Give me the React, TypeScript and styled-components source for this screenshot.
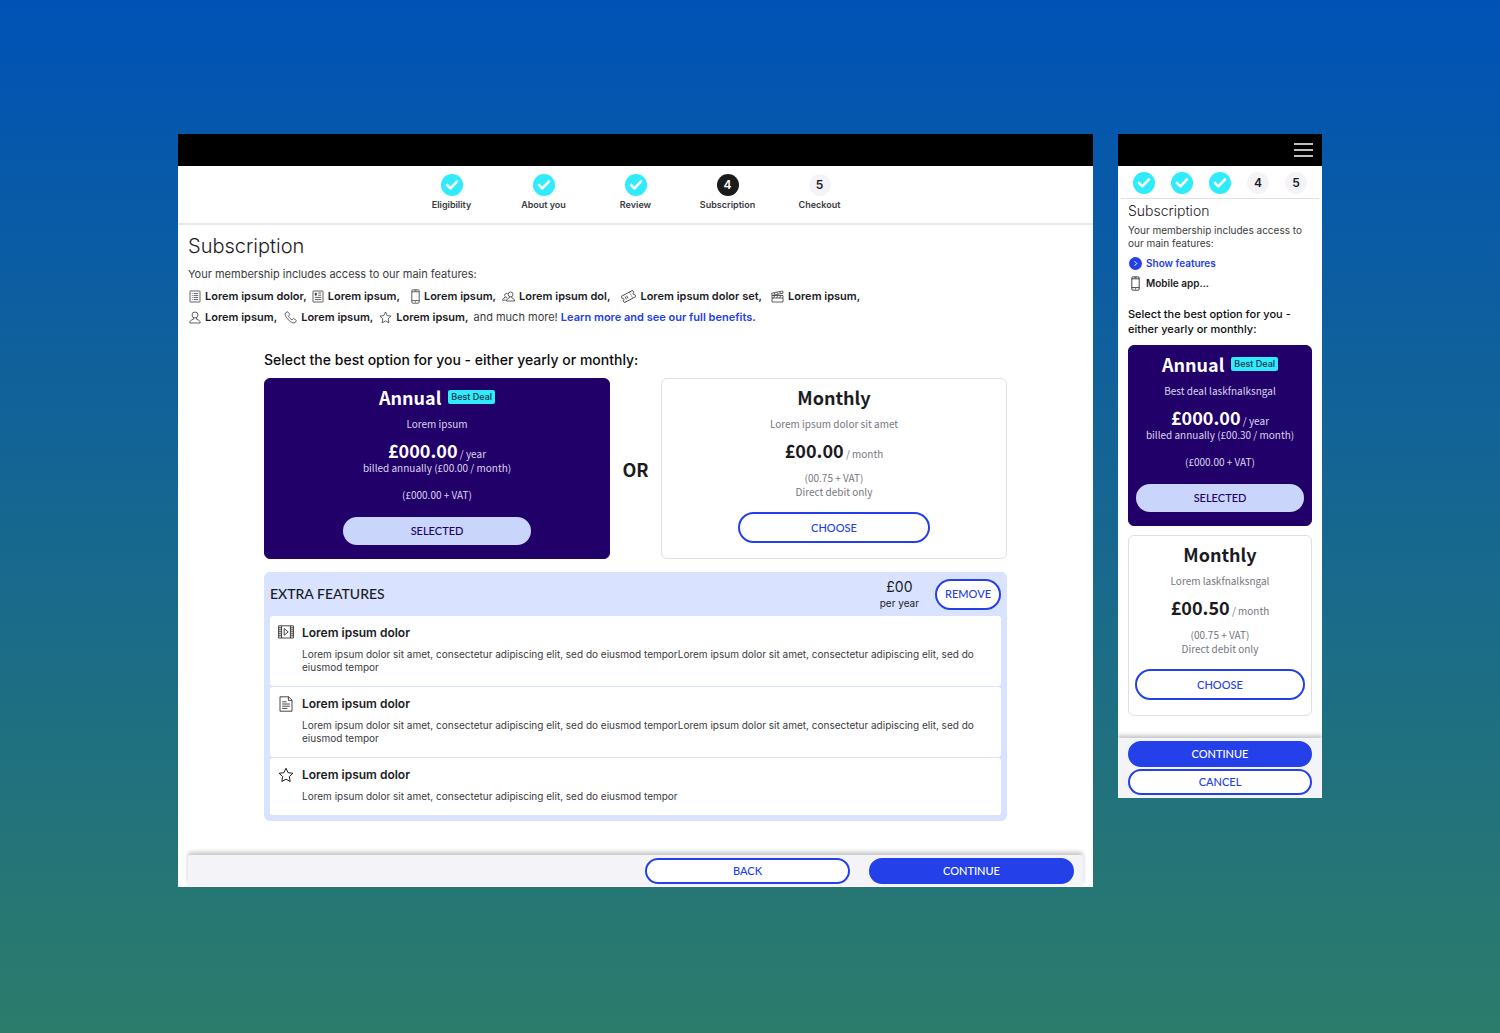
import React from "react";
import styled, { createGlobalStyle, css } from "styled-components";

const sans = `Inter, "Open Sans", sans-serif`;
const plan = `"Noto Sans CJK JP", "Noto Sans", sans-serif`;
const caps = `Lato, "Open Sans", sans-serif`;

const color = {
  ink: "#1b1b1f",
  text: "#3a3a3e",
  muted: "#76767e",
  blue: "#2440e8",
  cyan: "#2febfb",
  navy: "#22006a",
  pale: "#c9d5fa",
  panel: "#d9e2fe",
  mist: "#f4f3f8",
  line: "#e0e0e2",
};

const Global = createGlobalStyle`
  *, *::before, *::after { box-sizing: border-box; }
  body { margin: 0; font-family: ${sans}; color: ${color.ink}; }
  h1, h2, h3, p, ol, ul { margin: 0; padding: 0; font-weight: 400; }
  ol, ul { list-style: none; }
  svg { display: block; flex: none; }
`;

const Page = styled.main`
  min-height: 100vh;
  padding: 134px 178px;
  display: grid;
  grid-template-columns: minmax(0, 1fr) 204px;
  gap: 25px;
  align-items: start;
  background: linear-gradient(#0052b6, #2c7c6b);
`;

const Screen = styled.section`
  background: #fff;
  overflow: hidden;
`;

const TopBar = styled.header`
  height: 32px;
  padding: 0 9px;
  display: flex;
  align-items: center;
  justify-content: flex-end;
  background: #000;
`;

const MenuButton = styled.button`
  width: 19px;
  height: 14px;
  padding: 0;
  border: 0;
  background: none;
  color: #fff;
`;

const Steps = styled.ol<{ $compact?: boolean }>`
  display: flex;
  justify-content: center;
  ${(p) =>
    p.$compact
      ? css`
          margin: 0 3px;
          padding: 6px 0 4px;
          gap: 16px;
          border-bottom: 1px solid ${color.line};
        `
      : css`
          padding: 8px 0 12px;
          border-bottom: 2px solid #e9e9eb;
        `}
`;

const Step = styled.li<{ $compact?: boolean }>`
  width: ${(p) => (p.$compact ? 22 : 92)}px;
  display: flex;
  flex-direction: column;
  align-items: center;
  gap: 3px;
  font-size: 9px;
  line-height: 12px;
  font-weight: 600;
  color: ${color.text};
`;

const Dot = styled.span<{ $state: "done" | "current" | "next" }>`
  width: 22px;
  height: 22px;
  display: grid;
  place-items: center;
  border-radius: 50%;
  font-size: 12px;
  font-weight: 600;
  background: ${(p) => ({ done: color.cyan, current: "#1b1b1b", next: color.mist })[p.$state]};
  color: ${(p) => (p.$state === "next" ? color.ink : "#fff")};
`;

const Content = styled.div<{ $compact?: boolean }>`
  padding: ${(p) => (p.$compact ? "3px 10px 22px" : "9px 10px 34px")};
`;

const Title = styled.h1<{ $compact?: boolean }>`
  font-size: ${(p) => (p.$compact ? 14 : 20)}px;
  line-height: ${(p) => (p.$compact ? 18 : 24)}px;
  font-weight: 300;
`;

const Intro = styled.p<{ $compact?: boolean }>`
  margin-top: ${(p) => (p.$compact ? 4 : 8)}px;
  font-size: ${(p) => (p.$compact ? 10 : 11)}px;
  line-height: ${(p) => (p.$compact ? 13 : 16)}px;
  color: ${color.text};
`;

const FeatureLine = styled.ul`
  display: flex;
  flex-wrap: wrap;
  column-gap: 1px;
  margin-top: 6px;
  font-size: 11px;
  line-height: 16px;
  & + & {
    margin-top: 5px;
  }
`;

const Feature = styled.li`
  display: flex;
  align-items: center;
  font-weight: 600;
`;

const IconSlot = styled.span<{ $width: number }>`
  width: ${(p) => p.$width}px;
  padding-right: 4px;
  display: flex;
  justify-content: flex-end;
  color: ${color.text};
`;

const More = styled.li`
  padding-left: 4px;
  color: ${color.text};
`;

const TextLink = styled.a`
  color: ${color.blue};
  font-weight: 600;
  text-decoration: none;
`;

const Narrow = styled.div`
  margin: 26px 76px 0;
`;

const Choose = styled.h2<{ $compact?: boolean }>`
  font-weight: 500;
  color: #0c0c0e;
  ${(p) =>
    p.$compact
      ? css`
          margin: 14px 0 8px;
          font-size: 11px;
          line-height: 15px;
        `
      : css`
          margin-bottom: 9px;
          font-size: 14px;
          line-height: 18px;
        `}
`;

const Plans = styled.div<{ $compact?: boolean }>`
  display: grid;
  ${(p) =>
    p.$compact
      ? "row-gap: 9px;"
      : "grid-template-columns: minmax(0, 1fr) 51px minmax(0, 1fr); align-items: stretch;"}
`;

const Or = styled.span`
  align-self: center;
  text-align: center;
  font: 600 18px/24px ${plan};
`;

const Card = styled.article<{ $selected?: boolean }>`
  min-height: 181px;
  padding: 6px 4px 13px;
  display: flex;
  flex-direction: column;
  align-items: center;
  border: 1px solid ${(p) => (p.$selected ? color.navy : color.line)};
  border-radius: 6px;
  background: ${(p) => (p.$selected ? color.navy : "#fff")};
  color: ${(p) => (p.$selected ? "#dcd6ee" : color.muted)};
  font: 400 10px/14px ${plan};
  text-align: center;
`;

const PlanName = styled.h3<{ $selected?: boolean }>`
  display: flex;
  align-items: center;
  gap: 7px;
  font-size: 18px;
  line-height: 24px;
  font-weight: 600;
  color: ${(p) => (p.$selected ? "#fff" : color.ink)};
`;

const Badge = styled.span`
  padding: 0 3px;
  border-radius: 2px;
  background: ${color.cyan};
  color: #10304a;
  font: 500 9px/14px ${sans};
`;

const Tagline = styled.p`
  margin: 8px 0 9px;
`;

const Price = styled.p<{ $selected?: boolean }>`
  font-size: 18px;
  line-height: 21px;
  strong {
    font-weight: 700;
    color: ${(p) => (p.$selected ? "#fff" : color.ink)};
  }
  small {
    font-size: 10px;
    line-height: 10px;
  }
`;

const Notes = styled.div<{ $selected?: boolean }>`
  margin: ${(p) => (p.$selected ? "13px 0 15px" : "10px 0 13px")};
`;

const Pill = styled.button<{ $kind: "solid" | "outline" | "selected"; $width?: string; $height: number }>`
  width: ${(p) => p.$width ?? "auto"};
  height: ${(p) => p.$height}px;
  padding: 0;
  border: 2px solid
    ${(p) => ({ solid: color.blue, outline: color.blue, selected: color.pale })[p.$kind]};
  border-radius: 16px;
  background: ${(p) => ({ solid: color.blue, outline: "#fff", selected: color.pale })[p.$kind]};
  color: ${(p) => ({ solid: "#fff", outline: color.blue, selected: color.navy })[p.$kind]};
  font: 500 11px/14px ${caps};
  cursor: pointer;
`;

const Extras = styled.section`
  margin-top: 13px;
  padding: 0 6px 6px;
  border-radius: 6px;
  background: ${color.panel};
`;

const ExtrasHead = styled.header`
  height: 44px;
  display: flex;
  align-items: center;
  gap: 16px;
`;

const ExtrasTitle = styled.h2`
  flex: 1;
  font: 500 14px/20px ${caps};
`;

const ExtrasPrice = styled.p`
  display: flex;
  flex-direction: column;
  text-align: center;
  font-size: 10px;
  line-height: 14px;
  strong {
    font-size: 14px;
    line-height: 18px;
    font-weight: 400;
  }
`;

const ExtrasList = styled.ul`
  display: grid;
  gap: 1px;
`;

const Extra = styled.li`
  padding: 9px 8px 12px;
  display: grid;
  grid-template-columns: 16px minmax(0, 1fr);
  column-gap: 8px;
  justify-items: center;
  border-radius: 3px;
  background: #fff;
`;

const ExtraBody = styled.div`
  justify-self: stretch;
`;

const ExtraName = styled.h3`
  font-size: 12px;
  line-height: 16px;
  font-weight: 600;
`;

const ExtraText = styled.p`
  margin-top: 7px;
  font-size: 10px;
  line-height: 13px;
  color: ${color.text};
`;

const Footer = styled.footer<{ $compact?: boolean }>`
  display: flex;
  background: ${color.mist};
  box-shadow: 0 -3px 4px rgba(0, 0, 0, 0.22);
  ${(p) =>
    p.$compact
      ? css`
          flex-direction: column;
          gap: 2px;
          padding: 3px 10px;
        `
      : css`
          justify-content: flex-end;
          gap: 19px;
          margin: 0 10px 1px;
          padding: 3px 9px 2px;
          border-radius: 3px 3px 0 0;
        `}
`;

const Shortcuts = styled.div`
  margin-top: 3px;
  font-size: 10px;
  line-height: 20px;
  font-weight: 600;
`;

const Shortcut = styled.div`
  display: flex;
  align-items: center;
  gap: 3px;
  svg {
    width: 15px;
  }
`;

type IconName =
  | "list" | "news" | "phone" | "group" | "ticket" | "clapper"
  | "person" | "call" | "star" | "film" | "doc";

const icons: Record<IconName, { w: number; h: number; art: React.ReactNode }> = {
  list: {
    w: 12, h: 13,
    art: (
      <>
        <rect x="1" y="1" width="10" height="11" rx=".5" />
        <path d="M2.8 3.6h.8M4.6 3.6h4.6M2.8 5.6h.8M4.6 5.6h4.6M2.8 7.6h.8M4.6 7.6h4.6M2.8 9.6h.8M4.6 9.6h4.6" />
      </>
    ),
  },
  news: {
    w: 12, h: 13,
    art: (
      <>
        <rect x="1" y="1" width="10" height="11" rx=".5" />
        <path d="M6.2 3h3M6.2 5.2h3M2.8 7.4h6.4M2.8 9.6h6.4" />
        <path d="M3.2 3.2h1.2v2H3.200z" fill="currentColor" />
      </>
    ),
  },
  phone: {
    w: 9, h: 15,
    art: (
      <>
        <rect x=".8" y=".8" width="7.4" height="13.4" rx="1.2" />
        <path d="M.8 2.8h7.4M.8 11.6h7.4M3.4 1.8h2.2M4 12.9h1" />
      </>
    ),
  },
  group: {
    w: 13, h: 11,
    art: (
      <>
        <circle cx="8.6" cy="3.4" r="2.4" />
        <path d="M7.400 5.800v1.200C5.600 7.600 4.400 8.400 4.400 10h8.200c0-1.600-1-2.400-2.800-3V5.800" />
        <path d="M5.600 2.700a1.900 1.900 0 1 0-1 3.500v.9M2.600 6v1C1.200 7.500.5 8 .5 9.200h3.200" />
      </>
    ),
  },
  ticket: {
    w: 15, h: 13,
    art: (
      <g transform="rotate(-28 7.500 6.500)">
        <path d="M1 3h13v2.300a1.200 1.200 0 0 0 0 2.400V10H1V7.700a1.200 1.200 0 0 0 0-2.400z" />
        <path d="M4.400 5v3M6.200 5v3" />
        <path d="M10.500 3.500v6" strokeDasharray="1.200 1" />
      </g>
    ),
  },
  clapper: {
    w: 13, h: 13,
    art: (
      <>
        <path d="M1 5.500h11V12H1zM1 8h11M1 5.500L.7 3.200 11.700 1l.4 2.200L1 5.500" />
        <path d="M3 2.800l1.400 2M5.800 2.200l1.400 2M8.600 1.700l1.400 2M3.800 5.500L2.600 8M6.800 5.500L5.600 8M9.800 5.500L8.600 8" />
      </>
    ),
  },
  person: {
    w: 12, h: 13,
    art: (
      <>
        <circle cx="6" cy="4" r="3" />
        <path d="M4.600 6.800v1.400C2.200 9 .8 9.600.8 12h10.400c0-2.400-1.400-3-3.800-3.800V6.800" />
      </>
    ),
  },
  call: {
    w: 13, h: 13,
    art: (
      <path d="M3.400.8L1.400 2c-1 1 0 3.900 2.800 6.700s5.700 3.900 6.900 2.900l1.300-1.900c0-.5-2.300-2.100-2.900-2.100-.5 0-.9 1.200-1.500 1.200-.7 0-3.500-2.700-3.500-3.500 0-.6 1.200-1 1.200-1.600C5.700 3.100 4 .8 3.400.8z" />
    ),
  },
  star: {
    w: 13, h: 13,
    art: <path d="M6.500 1l1.700 3.600 3.900.5-2.900 2.700.7 4-3.400-1.900-3.400 1.900.7-4L.9 5.100l3.900-.5z" strokeLinejoin="round" />,
  },
  film: {
    w: 16, h: 14,
    art: (
      <>
        <path d="M.6.800h14.800v12.200H.6zM3.600.8V13M12.400.8V13" />
        <path d="M.6 2.800h3M.6 4.800h3M.6 6.800h3M.6 8.800h3M.6 10.800h3M12.400 2.800h3M12.400 4.800h3M12.400 6.800h3M12.400 8.800h3M12.400 10.800h3" />
        <path d="M6.200 3.600v6.600l4-3.300z" />
      </>
    ),
  },
  doc: {
    w: 14, h: 16,
    art: (
      <>
        <path d="M1 .800h8.600L13 4.200v11H1zM9.400.8v3.600H13" />
        <path d="M3.200 5.800h4.400M3.200 8h7.600M3.200 10.200h7.600M3.200 12.400h5.200" />
      </>
    ),
  },
};

function Icon({ name, scale = 1 }: { name: IconName; scale?: number }) {
  const { w, h, art } = icons[name];
  return (
    <svg
      width={w * scale}
      height={h * scale}
      viewBox={`0 0 ${w} ${h}`}
      fill="none"
      stroke="currentColor"
      strokeWidth=".8"
      aria-hidden="true"
    >
      {art}
    </svg>
  );
}

const Check = () => (
  <svg width="14" height="12" viewBox="0 0 14 12" fill="none" stroke="#fff" strokeWidth="2.600" aria-hidden="true">
    <path d="M2 6l3.400 3.400L12 2.400" strokeLinecap="round" strokeLinejoin="round" />
  </svg>
);

const stepNames = ["Eligibility", "About you", "Review", "Subscription", "Checkout"];

function Progress({ compact }: { compact?: boolean }) {
  return (
    <Steps $compact={compact}>
      {stepNames.map((name, i) => (
        <Step key={name} $compact={compact}>
          <Dot $state={i < 3 ? "done" : i === 3 && !compact ? "current" : "next"}>
            {i < 3 ? <Check /> : i + 1}
          </Dot>
          {!compact && name}
        </Step>
      ))}
    </Steps>
  );
}

function Annual({ tagline, monthly, width }: { tagline: string; monthly: string; width: string }) {
  return (
    <Card $selected>
      <PlanName $selected>
        Annual <Badge>Best Deal</Badge>
      </PlanName>
      <Tagline>{tagline}</Tagline>
      <Price $selected>
        <strong>£000.00</strong>
        <small> / year</small>
      </Price>
      <p>billed annually ({monthly} / month)</p>
      <Notes $selected>(£000.00 + VAT)</Notes>
      <Pill $kind="selected" $height={28} $width={width} type="button" aria-pressed="true">
        SELECTED
      </Pill>
    </Card>
  );
}

function Monthly({ tagline, price, width }: { tagline: string; price: string; width: string }) {
  return (
    <Card>
      <PlanName>Monthly</PlanName>
      <Tagline>{tagline}</Tagline>
      <Price>
        <strong>{price}</strong>
        <small> / month</small>
      </Price>
      <Notes>
        (00.75 + VAT)
        <br />
        Direct debit only
      </Notes>
      <Pill $kind="outline" $height={31} $width={width} type="button">
        CHOOSE
      </Pill>
    </Card>
  );
}

type FeatureItem = { icon: IconName; slot: number; label: string };

const firstLine: FeatureItem[] = [
  { icon: "list", slot: 17, label: "Lorem ipsum dolor," },
  { icon: "news", slot: 20, label: "Lorem ipsum," },
  { icon: "phone", slot: 23, label: "Lorem ipsum," },
  { icon: "group", slot: 22, label: "Lorem ipsum dol," },
  { icon: "ticket", slot: 29, label: "Lorem ipsum dolor set," },
  { icon: "clapper", slot: 25, label: "Lorem ipsum," },
];

const secondLine: FeatureItem[] = [
  { icon: "person", slot: 17, label: "Lorem ipsum," },
  { icon: "call", slot: 23, label: "Lorem ipsum," },
  { icon: "star", slot: 22, label: "Lorem ipsum," },
];

const renderFeature = (f: FeatureItem) => (
  <Feature key={f.icon}>
    <IconSlot $width={f.slot}>
      <Icon name={f.icon} />
    </IconSlot>
    {f.label}
  </Feature>
);

const sentence = "Lorem ipsum dolor sit amet, consectetur adipiscing elit, sed do eiusmod tempor";

const extras: { icon: IconName; text: string }[] = [
  { icon: "film", text: sentence + sentence },
  { icon: "doc", text: sentence + sentence },
  { icon: "star", text: sentence },
];

export default function App() {
  return (
    <Page>
      <Global />
      <Screen>
        <TopBar />
        <Progress />
        <Content>
          <Title>Subscription</Title>
          <Intro>Your membership includes access to our main features:</Intro>
          <FeatureLine>{firstLine.map(renderFeature)}</FeatureLine>
          <FeatureLine>
            {secondLine.map(renderFeature)}
            <More>
              and much more! <TextLink href="#benefits">Learn more and see our full benefits.</TextLink>
            </More>
          </FeatureLine>
          <Narrow>
            <Choose>Select the best option for you - either yearly or monthly:</Choose>
            <Plans>
              <Annual tagline="Lorem ipsum" monthly="£00.00" width="56%" />
              <Or>OR</Or>
              <Monthly tagline="Lorem ipsum dolor sit amet" price="£00.00" width="57%" />
            </Plans>
            <Extras>
              <ExtrasHead>
                <ExtrasTitle>EXTRA FEATURES</ExtrasTitle>
                <ExtrasPrice>
                  <strong>£00</strong> per year
                </ExtrasPrice>
                <Pill $kind="outline" $height={31} $width="66px" type="button">
                  REMOVE
                </Pill>
              </ExtrasHead>
              <ExtrasList>
                {extras.map((e) => (
                  <Extra key={e.icon}>
                    <Icon name={e.icon} scale={e.icon === "star" ? 16 / 13 : 1} />
                    <ExtraBody>
                      <ExtraName>Lorem ipsum dolor</ExtraName>
                      <ExtraText>{e.text}</ExtraText>
                    </ExtraBody>
                  </Extra>
                ))}
              </ExtrasList>
            </Extras>
          </Narrow>
        </Content>
        <Footer>
          <Pill $kind="outline" $height={26} $width="205px" type="button">BACK</Pill>
          <Pill $kind="solid" $height={26} $width="205px" type="button">CONTINUE</Pill>
        </Footer>
      </Screen>

      <Screen>
        <TopBar>
          <MenuButton type="button" aria-label="Menu">
            <svg width="19" height="14" viewBox="0 0 19 14" stroke="currentColor" strokeWidth="1.400">
              <path d="M0 1h19M0 7h19M0 13h19" />
            </svg>
          </MenuButton>
        </TopBar>
        <Progress compact />
        <Content $compact>
          <Title as="h2" $compact>Subscription</Title>
          <Intro $compact>Your membership includes access to our main features:</Intro>
          <Shortcuts>
            <Shortcut>
              <svg width="15" height="13" viewBox="0 0 15 13" fill="none" aria-hidden="true">
                <circle cx="7.500" cy="6.500" r="6.500" fill={color.blue} />
                <path d="M6.500 4.200l2.300 2.300-2.300 2.300" stroke="#fff" />
              </svg>
              <TextLink href="#features">Show features</TextLink>
            </Shortcut>
            <Shortcut>
              <Icon name="phone" />
              Mobile app...
            </Shortcut>
          </Shortcuts>
          <Choose $compact>Select the best option for you - either yearly or monthly:</Choose>
          <Plans $compact>
            <Annual tagline="Best deal laskfnalksngal" monthly="£00.30" width="96%" />
            <Monthly tagline="Lorem laskfnalksngal" price="£00.50" width="98%" />
          </Plans>
        </Content>
        <Footer $compact>
          <Pill $kind="solid" $height={26} type="button">CONTINUE</Pill>
          <Pill $kind="outline" $height={26} type="button">CANCEL</Pill>
        </Footer>
      </Screen>
    </Page>
  );
}
